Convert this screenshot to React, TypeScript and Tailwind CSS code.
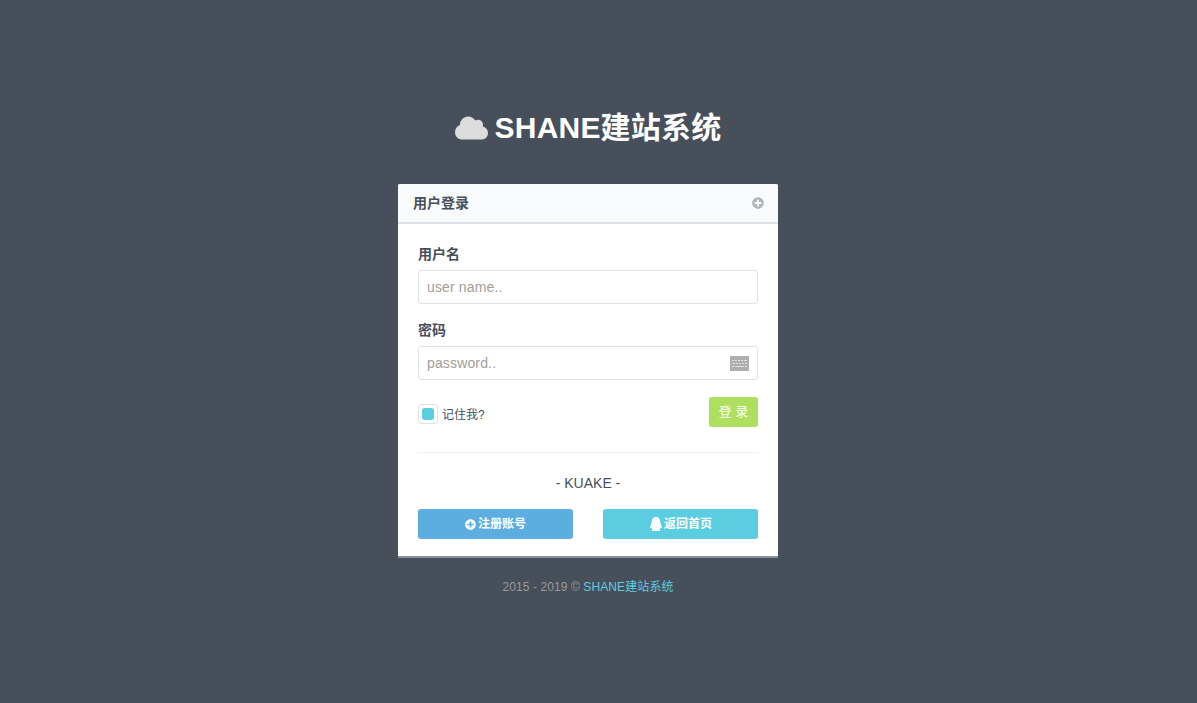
import { FaCloud, FaPlusCircle, FaQq } from "react-icons/fa";

const fontStack = "font-['Liberation_Sans','Noto_Sans_CJK_SC',sans-serif]";

function KeyboardIcon() {
  return (
    <svg
      viewBox="0 0 19 15"
      className="absolute top-[10px] right-[9px] h-[15px] w-[19px]"
      shapeRendering="crispEdges"
    >
      <rect width="19" height="15" fill="#aeaeae" />
      <path d="M2 4h2v1H2zM5 4h2v1H5zM8 4h2v1H8zM11 4h2v1h-2zM14 4h3v1h-3z" fill="#e2e2e2" />
      <path d="M2 7h3v1H2zM6 7h2v1H6zM9 7h2v1H9zM12 7h2v1h-2zM15 7h2v1h-2z" fill="#e2e2e2" />
      <path d="M2 10h2v1H2zM5 10h9v1H5zM15 10h2v1h-2z" fill="#e2e2e2" />
    </svg>
  );
}

function Field({
  label,
  placeholder,
  type,
  children,
}: {
  label: string;
  placeholder: string;
  type: string;
  children?: React.ReactNode;
}) {
  return (
    <div className="mb-[16px]">
      <label className="mb-[5px] block h-[21px] text-[14px] leading-[21px] font-bold text-[#474f5b]">
        {label}
      </label>
      <div className="relative">
        <input
          type={type}
          placeholder={placeholder}
          className="block h-[34px] w-full rounded-[3px] border border-[#dde1ea] bg-white px-[8px] text-[14px] tracking-[0.15px] text-[#474f5b] outline-none placeholder:text-[#a39e98]"
        />
        {children}
      </div>
    </div>
  );
}

export default function App() {
  return (
    <div className={`h-[703px] w-full overflow-hidden bg-[#474f5b] ${fontStack}`}>
      <div className="flex w-[1176px] flex-col items-center pt-[107px]">
        <h1 className="flex h-[42px] items-center text-[30px] leading-[42px] font-bold tracking-[0.2px] text-white">
          <FaCloud className="mr-[7px] h-[30px] w-[33px] text-[#dcdcdc]" />
          SHANE建站系统
        </h1>

        <div className="mt-[35px] w-[380px] overflow-hidden rounded-t-[2px] border-b-2 border-[#8f929a] bg-white">
          <div className="flex h-[40px] items-center justify-between border-b-2 border-[#dde1ea] bg-[#f9fafc] pr-[14px] pl-[15px]">
            <span className="text-[14px] font-bold text-[#474f5b]">用户登录</span>
            <FaPlusCircle className="h-[12px] w-[12px] text-[#b4b6bc]" />
          </div>

          <div className="px-[20px] pt-[20px] pb-[17px]">
            <Field label="用户名" placeholder="user name.." type="text" />
            <Field label="密码" placeholder="password.." type="password">
              <KeyboardIcon />
            </Field>

            <div className="flex items-start justify-between pt-[1px]">
              <label className="mt-[7px] flex items-center text-[12px] text-[#474f5b]">
                <span className="mr-[4px] flex h-[20px] w-[20px] items-center justify-center rounded-[3px] border border-[#dde1ea] bg-white">
                  <span className="h-[12px] w-[12px] rounded-[3px] bg-[#5bcde0]" />
                </span>
                <span className="mt-[1px]">记住我?</span>
              </label>
              <button className="h-[30px] w-[49px] rounded-[3px] bg-[#afdf5e] text-[13px] text-white">
                登 录
              </button>
            </div>

            <div className="mt-[25px] border-t border-[#eef0f3]" />

            <p className="mt-[20px] text-center text-[14px] leading-[20px] text-[#474f5b]">- KUAKE -</p>

            <div className="mt-[16px] flex justify-between">
              <button className="flex h-[30px] w-[155px] items-center justify-center rounded-[3px] bg-[#5cade0] text-[12px] font-bold text-white">
                <FaPlusCircle className="mr-[2px] h-[11px] w-[11px]" />
                注册账号
              </button>
              <button className="flex h-[30px] w-[155px] items-center justify-center rounded-[3px] bg-[#5bcde0] text-[12px] font-bold text-white">
                <FaQq className="mr-[1px] h-[14px] w-[14px]" />
                返回首页
              </button>
            </div>
          </div>
        </div>

        <p className="mt-[21px] text-[12px] leading-[17px] tracking-[0.1px] text-[#98999d]">
          2015 - 2019 © <a className="text-[#5bcde0]">SHANE建站系统</a>
        </p>
      </div>
    </div>
  );
}
